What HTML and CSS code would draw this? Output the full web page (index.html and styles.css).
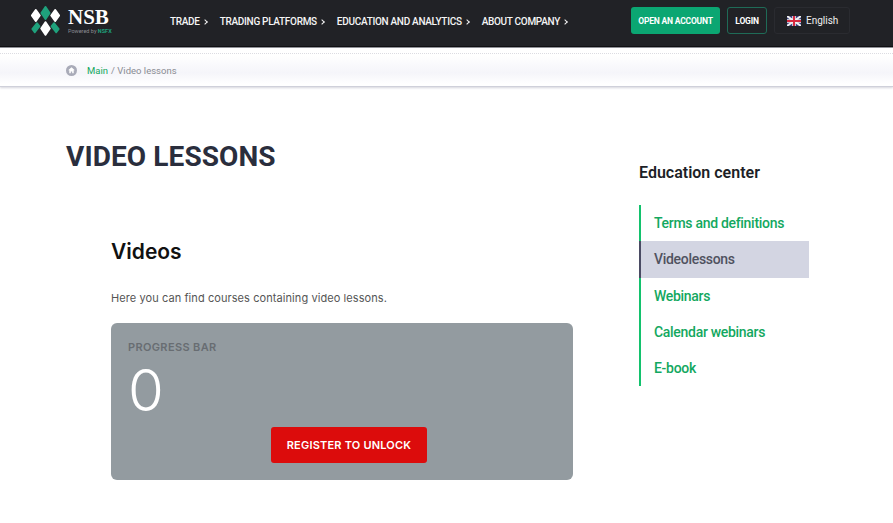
FILE: index.html
```html
<!DOCTYPE html>
<html lang="en">
<head>
    <meta charset="UTF-8">
    <meta name="viewport" content="width=device-width, initial-scale=1.0">
    <title>Video lessons</title>
    <link rel="stylesheet" href="styles.css">
</head>
<body>

<header class="topbar">
    <a class="logo" href="#">
        <svg class="logo-mark" width="29" height="30" viewBox="0 0 29 30">
            <polygon class="mark-green" points="14.500,0.800 18.700,7 14.500,13.200 10.300,7"/>
            <polygon class="mark-white" points="4.800,3.800 8.900,9.500 4.800,15.200 0.700,9.500"/>
            <polygon class="mark-white" points="24.200,3.800 28.300,9.500 24.200,15.200 20.100,9.500"/>
            <polygon class="mark-green" points="6,17 8.600,20.300 3.800,26.500 1.200,23"/>
            <polygon class="mark-green" points="23,17 27.800,23 25.200,26.500 20.400,20.300"/>
            <polygon class="mark-white" points="14.500,16 18.900,22.500 14.500,29 10.100,22.500"/>
        </svg>
        <span class="logo-text">
            <span class="logo-name">NSB</span>
            <span class="logo-sub">Powered by <b>NSFX</b></span>
        </span>
    </a>
    <nav class="menu">
        <a href="#">TRADE<i class="chev"></i></a>
        <a href="#">TRADING PLATFORMS<i class="chev"></i></a>
        <a href="#">EDUCATION AND ANALYTICS<i class="chev"></i></a>
        <a href="#">ABOUT COMPANY<i class="chev"></i></a>
    </nav>
    <div class="actions">
        <a class="btn btn-open" href="#">OPEN AN ACCOUNT</a>
        <a class="btn btn-login" href="#">LOGIN</a>
        <a class="btn-lang" href="#">
            <svg width="14" height="10" viewBox="0 0 14 10">
                <rect width="14" height="10" fill="#3b3f7c"/>
                <path d="M0 0L14 10M14 0L0 10" stroke="#f1f1f1" stroke-width="2"/>
                <path d="M7 0V10M0 5H14" stroke="#f1f1f1" stroke-width="3.500"/>
                <path d="M7 0V10M0 5H14" stroke="#d6293f" stroke-width="2"/>
            </svg>
            English
        </a>
    </div>
</header>

<div class="crumbs">
    <div class="crumbs-inner">
        <svg class="home" width="11" height="11" viewBox="0 0 11 11">
            <circle cx="5.500" cy="5.500" r="5.500" fill="#a9abb8"/>
            <path d="M5.500 2.300L8.800 5.300H7.700V8.200H6.200V6.400H4.800V8.200H3.300V5.300H2.200Z" fill="#fff"/>
        </svg>
        <a href="#">Main</a>
        <span>/ Video lessons</span>
    </div>
</div>

<main class="page">
    <section class="content">
        <h1>VIDEO LESSONS</h1>
        <div class="lessons">
            <h2>Videos</h2>
            <p>Here you can find courses containing video lessons.</p>
            <div class="progress-card">
                <div class="progress-label">PROGRESS BAR</div>
                <div class="progress-value">0</div>
                <a class="unlock" href="#">REGISTER TO UNLOCK</a>
            </div>
        </div>
    </section>
    <aside class="sidebar">
        <h3>Education center</h3>
        <ul>
            <li><a href="#">Terms and definitions</a></li>
            <li class="active"><a href="#">Videolessons</a></li>
            <li><a href="#">Webinars</a></li>
            <li><a href="#">Calendar webinars</a></li>
            <li><a href="#">E-book</a></li>
        </ul>
    </aside>
</main>

</body>
</html>
```
FILE: styles.css
```css
* {
    box-sizing: border-box;
}
body {
    margin: 0;
    height: 523px;
    overflow: hidden;
    background: white;
    font-family: 'Roboto', sans-serif;
}
a {
    text-decoration: none;
    color: inherit;
}
.topbar {
    height: 47px;
    padding: 0 0 5px 31px;
    background: #212226;
    border-bottom: 1px solid #0d0d0f;
    display: flex;
    align-items: center;
}
.logo {
    display: flex;
    align-items: center;
    gap: 8px;
    width: 139px;
}
.logo-mark {
    display: block;
}
.mark-green {
    fill: #1fa17c;
    stroke: #1fa17c;
    stroke-width: 1.600;
    stroke-linejoin: round;
}
.mark-white {
    fill: #fff;
    stroke: #fff;
    stroke-width: 1.600;
    stroke-linejoin: round;
}
.logo-text {
    display: flex;
    flex-direction: column;
    color: white;
}
.logo-name {
    font-family: 'Liberation Serif', serif;
    font-size: 21px;
    font-weight: 700;
    line-height: 18px;
}
.logo-sub {
    margin-top: 2px;
    font-size: 5.500px;
    line-height: 6px;
    color: #8b8d93;
    white-space: nowrap;
}
.logo-sub b {
    color: #1fa17c;
}
.menu {
    display: flex;
    gap: 13px;
    margin-top: 1px;
    color: #f5f5f5;
    font-size: 10px;
    font-weight: 500;
    letter-spacing: -0.3px;
    width: 461px;
}
.chev {
    display: inline-block;
    width: 4px;
    height: 4px;
    margin-left: 3px;
    border-top: 1px solid #f5f5f5;
    border-right: 1px solid #f5f5f5;
    transform: rotate(45deg);
    vertical-align: 1px;
}
.actions {
    display: flex;
    align-items: center;
    gap: 7px;
}
.btn {
    display: flex;
    align-items: center;
    justify-content: center;
    height: 27px;
    border-radius: 3px;
    color: white;
    font-size: 8.500px;
    font-weight: 700;
    letter-spacing: -0.2px;
}
.btn-open {
    width: 89px;
    background: #0ba672;
}
.btn-login {
    width: 40px;
    border: 1px solid #1f6b57;
}
.btn-lang {
    display: flex;
    align-items: center;
    gap: 5px;
    width: 76px;
    height: 27px;
    padding-left: 12px;
    border: 1px solid #2a2b30;
    border-radius: 3px;
    color: #f0f0f0;
    font-size: 10px;
}
.crumbs {
    height: 40px;
    border-top: 1px solid #8f9096;
    border-bottom: 1px solid #cfd0da;
    background: linear-gradient(#ffffff 20%, #f5f5fa 65%, #ffffff 95%);
    box-shadow: 0 1px 2px rgba(150, 152, 170, 0.4);
    position: relative;
}
.crumbs::before {
    content: "";
    position: absolute;
    left: 0;
    right: 0;
    top: 5px;
    border-top: 1px dotted #dcdce2;
}
.crumbs-inner {
    display: flex;
    align-items: center;
    height: 100%;
    padding: 7px 0 0 66px;
    font-size: 9.500px;
    color: #8a8c93;
}
.crumbs-inner a {
    margin: 0 3px 0 10px;
    color: #13a860;
}
.page {
    display: flex;
    padding: 0 0 0 66px;
}
.content {
    width: 573px;
}
h1 {
    margin: 53px 0 0;
    font-size: 28px;
    line-height: 34px;
    font-weight: 700;
    letter-spacing: 0.1px;
    color: #2a2e3d;
}
.lessons {
    padding-left: 45px;
    width: 507px;
}
h2 {
    margin: 64px 0 0;
    font-family: 'Inter', sans-serif;
    font-size: 21px;
    line-height: 28px;
    font-weight: 600;
    color: #111;
}
.lessons p {
    margin: 24px 0 0;
    font-family: 'Inter', sans-serif;
    font-size: 11px;
    line-height: 16px;
    letter-spacing: 0.08px;
    color: #555;
}
.progress-card {
    margin-top: 17px;
    height: 157px;
    padding: 17px 17px 0;
    background: #939ba0;
    border-radius: 6px;
    display: flex;
    flex-direction: column;
}
.progress-label {
    font-family: 'Inter', sans-serif;
    font-size: 11px;
    line-height: 14px;
    font-weight: 600;
    letter-spacing: 0.35px;
    color: #686d72;
}
.progress-value {
    margin-top: 6px;
    font-family: 'Inter', sans-serif;
    font-size: 58px;
    line-height: 60px;
    font-weight: 300;
    color: white;
}
.unlock {
    align-self: center;
    margin: 7px 0 0 14px;
    width: 156px;
    height: 36px;
    display: flex;
    align-items: center;
    justify-content: center;
    background: #dc0c0c;
    border-radius: 3px;
    color: white;
    font-family: 'Inter', sans-serif;
    font-size: 11px;
    font-weight: 600;
    letter-spacing: 0.2px;
}
.sidebar h3 {
    margin: 74px 0 0;
    font-size: 16px;
    line-height: 24px;
    font-weight: 600;
    color: #1d1f27;
}
.sidebar ul {
    list-style: none;
    margin: 20px 0 0;
    padding: 0;
    width: 170px;
    border-left: 2px solid #13c26d;
}
.sidebar li {
    height: 36.250px;
    display: flex;
    align-items: center;
    padding-left: 13px;
    font-size: 14px;
    font-weight: 500;
    letter-spacing: -0.3px;
    color: #13a860;
}
.sidebar li.active {
    background: #d3d5e2;
    color: #50525f;
    margin-left: -2px;
    padding-left: 13px;
    border-left: 2px solid #4a4b63;
}
```
